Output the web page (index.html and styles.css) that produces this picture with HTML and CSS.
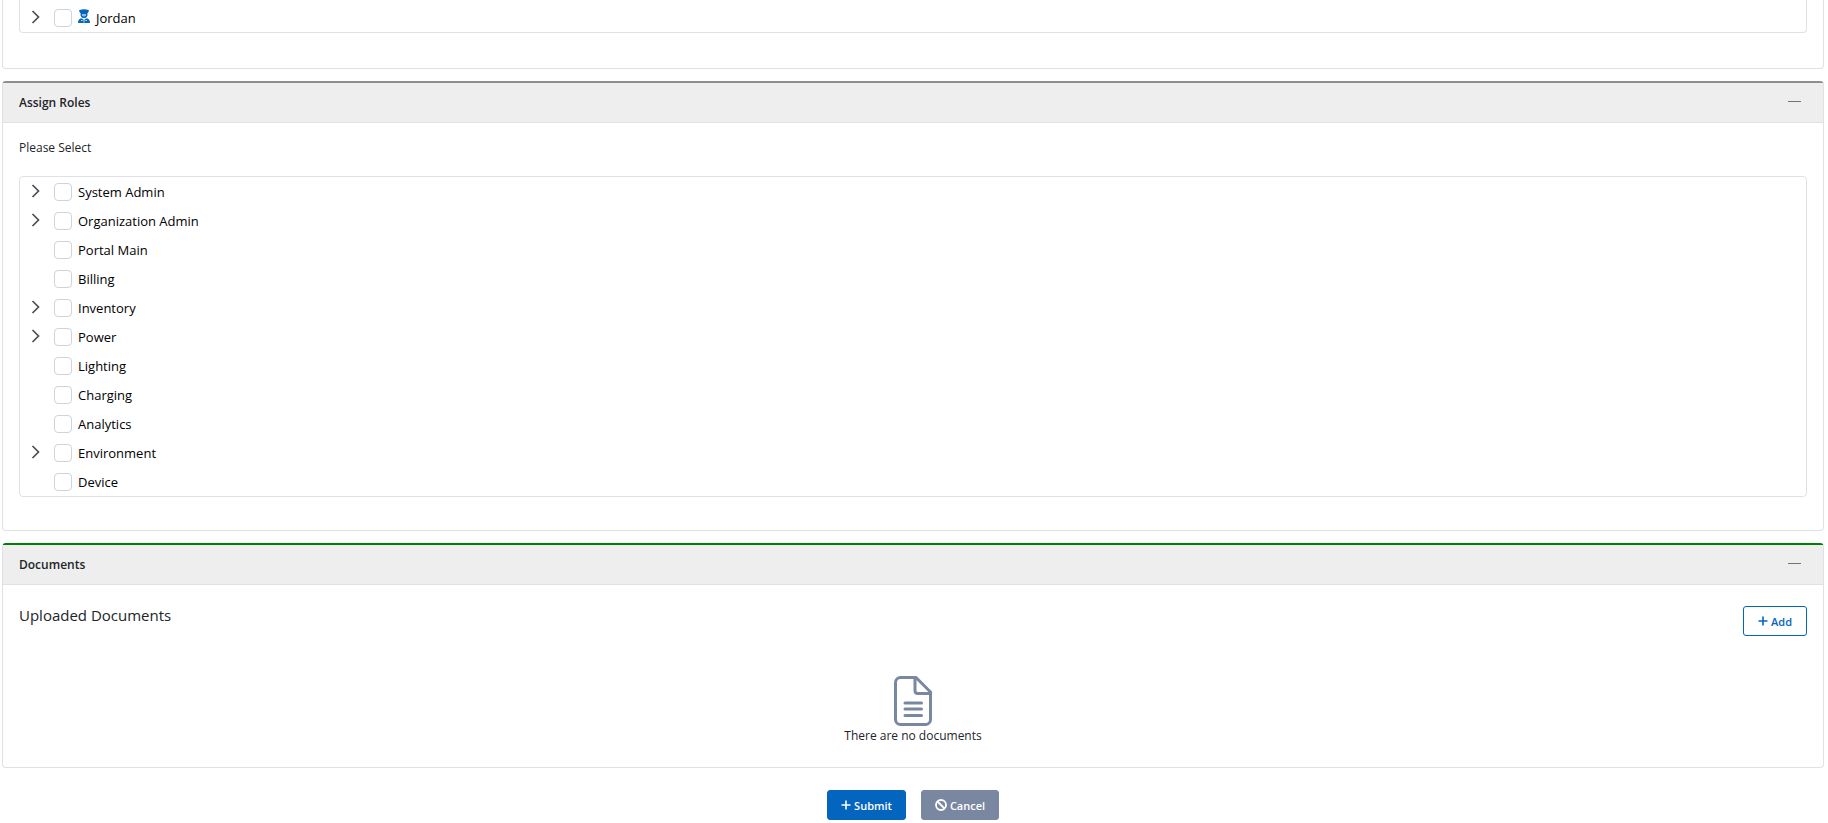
FILE: index.html
```html
<!DOCTYPE html>
<html lang="en">

<head>
    <meta charset="UTF-8">
    <meta name="viewport" content="width=device-width, initial-scale=1.0">
    <title>Add User</title>
    <link rel="stylesheet" href="styles.css">
</head>

<body>
    <svg class="sprite" aria-hidden="true">
        <symbol id="chevron" viewBox="0 0 8 14">
            <path d="M1 1l6 6-6 6" fill="none" stroke="currentColor" stroke-width="1.7" />
        </symbol>
        <symbol id="plus" viewBox="0 0 10 10">
            <path d="M5 0.5v9M0.5 5h9" fill="none" stroke="currentColor" stroke-width="1.6" />
        </symbol>
    </svg>

    <form>
        <section class="card card-first">
            <div class="card-body">
                <ul class="tree">
                    <li>
                        <button type="button" class="caret" aria-label="Expand Jordan"><svg><use href="#chevron" /></svg></button>
                        <input type="checkbox" id="org-jordan">
                        <label for="org-jordan">
                            <svg class="user-icon" viewBox="0 0 12 14">
                                <path d="M1 1.2Q6-.8 11 1.2L10 4H2z" />
                                <path d="M2.6 4h6.8v2.2Q9 9 6 9T2.6 6.2z" />
                                <path d="M4 5h4v1.2Q7.5 7.6 6 7.6T4 6.2z" fill="#8dbbe6" />
                                <path d="M0 14q0-4 3.5-4.8L6 11l2.5-1.8Q12 10 12 14z" />
                                <path d="M3 11.5h1.5M7.5 11.5H9M6 11v2.5" stroke="#fff" stroke-width=".8" />
                            </svg>
                            Jordan
                        </label>
                    </li>
                </ul>
            </div>
        </section>

        <section class="card roles">
            <header class="card-header">
                <h2>Assign Roles</h2>
                <button type="button" class="collapse" aria-label="Collapse Assign Roles"></button>
            </header>
            <div class="card-body">
                <p class="hint">Please Select</p>
                <ul class="tree">
                    <li>
                        <button type="button" class="caret" aria-label="Expand System Admin"><svg><use href="#chevron" /></svg></button>
                        <input type="checkbox" id="role-system">
                        <label for="role-system">System Admin</label>
                    </li>
                    <li>
                        <button type="button" class="caret" aria-label="Expand Organization Admin"><svg><use href="#chevron" /></svg></button>
                        <input type="checkbox" id="role-organization">
                        <label for="role-organization">Organization Admin</label>
                    </li>
                    <li class="leaf">
                        <input type="checkbox" id="role-portal">
                        <label for="role-portal">Portal Main</label>
                    </li>
                    <li class="leaf">
                        <input type="checkbox" id="role-billing">
                        <label for="role-billing">Billing</label>
                    </li>
                    <li>
                        <button type="button" class="caret" aria-label="Expand Inventory"><svg><use href="#chevron" /></svg></button>
                        <input type="checkbox" id="role-inventory">
                        <label for="role-inventory">Inventory</label>
                    </li>
                    <li>
                        <button type="button" class="caret" aria-label="Expand Power"><svg><use href="#chevron" /></svg></button>
                        <input type="checkbox" id="role-power">
                        <label for="role-power">Power</label>
                    </li>
                    <li class="leaf">
                        <input type="checkbox" id="role-lighting">
                        <label for="role-lighting">Lighting</label>
                    </li>
                    <li class="leaf">
                        <input type="checkbox" id="role-charging">
                        <label for="role-charging">Charging</label>
                    </li>
                    <li class="leaf">
                        <input type="checkbox" id="role-analytics">
                        <label for="role-analytics">Analytics</label>
                    </li>
                    <li>
                        <button type="button" class="caret" aria-label="Expand Environment"><svg><use href="#chevron" /></svg></button>
                        <input type="checkbox" id="role-environment">
                        <label for="role-environment">Environment</label>
                    </li>
                    <li class="leaf">
                        <input type="checkbox" id="role-device">
                        <label for="role-device">Device</label>
                    </li>
                </ul>
            </div>
        </section>

        <section class="card documents">
            <header class="card-header">
                <h2>Documents</h2>
                <button type="button" class="collapse" aria-label="Collapse Documents"></button>
            </header>
            <div class="card-body">
                <div class="toolbar">
                    <h3>Uploaded Documents</h3>
                    <button type="button" class="btn btn-outline"><svg class="plus"><use href="#plus" /></svg>Add</button>
                </div>
                <div class="empty">
                    <svg viewBox="0 0 38 50" fill="none" stroke="currentColor" stroke-width="3" stroke-linecap="round" stroke-linejoin="round">
                        <path d="M6.5 1.5H22L36.5 16v27.5a5 5 0 0 1-5 5h-25a5 5 0 0 1-5-5v-37a5 5 0 0 1 5-5z" />
                        <path d="M21 2v12.5q0 3 3 3h12" />
                        <path d="M11 27h16.5M11 33h16.5M11 39.5h16.5" />
                    </svg>
                    <p>There are no documents</p>
                </div>
            </div>
        </section>

        <div class="actions">
            <button type="submit" class="btn btn-primary"><svg class="plus"><use href="#plus" /></svg>Submit</button>
            <button type="button" class="btn btn-secondary">
                <svg class="ban" viewBox="0 0 12 12" fill="none" stroke="currentColor" stroke-width="1.8">
                    <circle cx="6" cy="6" r="5" />
                    <path d="M2.5 2.5l7 7" />
                </svg>Cancel</button>
        </div>
    </form>
</body>

</html>
```
FILE: styles.css
```css
* {
    box-sizing: border-box;
}

body {
    margin: 0;
    background: #fff;
    color: #212529;
    font-family: "Open Sans", "Noto Sans", sans-serif;
    font-size: 12px;
    line-height: 20px;
}

h2,
h3,
p,
ul {
    margin: 0;
    padding: 0;
}

button {
    font-family: inherit;
    cursor: pointer;
}

.sprite {
    display: none;
}

/* Cards */
.card {
    margin: 0 4px 12px 2px;
    border: 1px solid #dee2e6;
    border-radius: 4px;
}

.card-body {
    padding: 15px 16px 33px;
}

.card-first {
    border-top: 0;
    border-top-left-radius: 0;
    border-top-right-radius: 0;
}

.card-first .card-body {
    padding: 0 16px 35px;
}

.card-first .tree {
    padding-top: 3px;
    border-top: 0;
    border-top-left-radius: 0;
    border-top-right-radius: 0;
}

.roles {
    border-top: 2px solid #8f8f8f;
}

.documents {
    border-top: 2px solid #008000;
}

.card-header {
    display: flex;
    align-items: center;
    justify-content: space-between;
    height: 40px;
    padding: 0 16px;
    background: #eee;
    border-bottom: 1px solid #dee2e6;
}

.card-header h2 {
    font-size: 12px;
    font-weight: 600;
}

.collapse {
    width: 25px;
    height: 20px;
    padding: 0 6px 2px;
    border: 0;
    background: none;
}

.collapse::before {
    content: "";
    display: block;
    height: 1px;
    background: #6c757d;
}

.hint {
    margin-bottom: 18px;
}

/* Trees */
.tree {
    list-style: none;
    border: 1px solid #dee2e6;
    border-radius: 4px;
    color: #000;
    font-size: 13px;
}

.tree li {
    display: flex;
    align-items: center;
    height: 29px;
}

.tree .leaf {
    padding-left: 34px;
}

.caret {
    width: 34px;
    height: 20px;
    padding: 0 0 2px 11px;
    border: 0;
    background: none;
    color: #495057;
    text-align: left;
}

.caret svg {
    display: block;
    width: 9px;
    height: 14px;
}

.tree input {
    appearance: none;
    width: 18px;
    height: 18px;
    margin: 0 6px 0 0;
    border: 1px solid #ced4da;
    border-radius: 4px;
    background: #fff;
}

.tree input:checked {
    background: #0465bf;
}

.tree label {
    display: flex;
    align-items: center;
    gap: 6px;
}

.user-icon {
    width: 12px;
    height: 14px;
    margin-bottom: 4px;
    fill: #0465bf;
}

/* Documents */
.documents .card-body {
    padding: 21px 16px;
}

.toolbar {
    display: flex;
    align-items: flex-start;
    justify-content: space-between;
}

.toolbar h3 {
    font-size: 15px;
    font-weight: 400;
    line-height: 18px;
}

.empty {
    display: flex;
    flex-direction: column;
    align-items: center;
    margin-top: 40px;
}

.empty svg {
    width: 38px;
    height: 50px;
    color: #7a87a1;
}

/* Buttons */
.btn {
    display: flex;
    align-items: center;
    justify-content: center;
    gap: 3px;
    height: 30px;
    padding: 0 12px;
    border: 1px solid #0465bf;
    border-radius: 3px;
    font-size: 11px;
    font-weight: 600;
}

.btn-outline {
    min-width: 64px;
    background: #fff;
    color: #0465bf;
}

.btn-primary {
    min-width: 79px;
    background: #0465bf;
    color: #fff;
}

.btn-secondary {
    min-width: 78px;
    background: #7a87a1;
    border-color: #7a87a1;
    color: #fff;
}

.plus {
    width: 10px;
    height: 10px;
}

.ban {
    width: 12px;
    height: 12px;
}

.actions {
    display: flex;
    justify-content: center;
    gap: 15px;
    margin: 22px 4px 0 2px;
}
```
